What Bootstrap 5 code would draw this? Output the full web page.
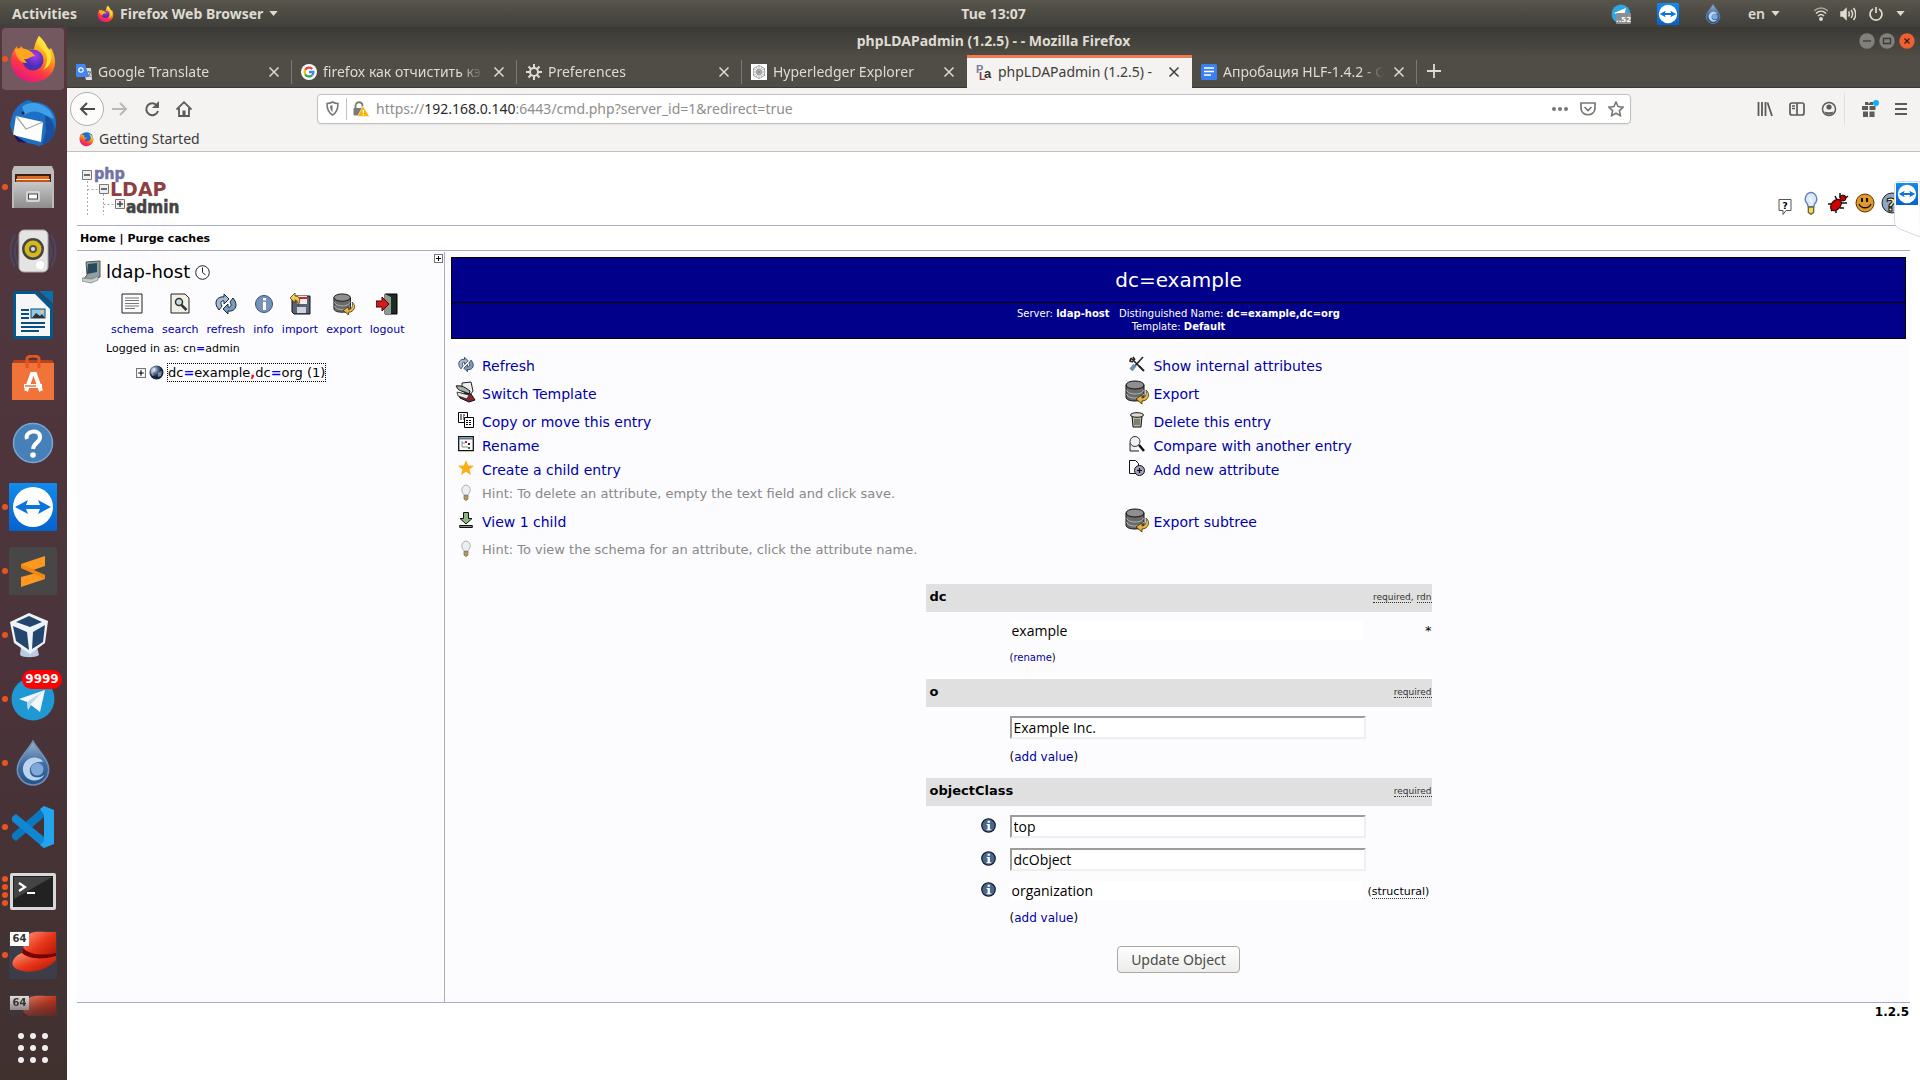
<!DOCTYPE html>
<html lang="en">
<head>
<meta charset="utf-8">
<meta name="viewport" content="width=device-width, initial-scale=1">
<title>phpLDAPadmin (1.2.5) -</title>
<link href="https://cdn.jsdelivr.net/npm/bootstrap@5.3.0/dist/css/bootstrap.min.css" rel="stylesheet">
<style>
:root { --ui: "Noto Sans", "Open Sans", sans-serif; --field: "Open Sans", "Noto Sans", sans-serif; --page: "DejaVu Sans", sans-serif; --rule: #aaaacc; --blue: #0000aa; }
body { font-family: var(--ui); font-size: 14px; line-height: 20px; min-height: 100vh; background: #fff; overflow-x: hidden; }
svg { display: block; flex: none; }
button { font-family: inherit; }
.bare { border: 0; background: none; padding: 0; color: inherit; display: flex; align-items: center; justify-content: center; }

.topbar { height: 27px; background: linear-gradient(#58554c, #403f3a); color: #dfdbd2; font-weight: 600; line-height: 27px; }
.topbar .start { flex: 1 1 82px; padding-left: 12px; gap: 20px; }
.topbar .end { flex: 1 1 0; padding-right: 15px; justify-content: flex-end; }
.topbar .status { gap: 12px; margin-left: 34px; }
.app-name, .lang { gap: 6px; }
.lang { margin-left: 27px; }
.tray { gap: 26px; }

.dock { width: 67px; flex: none; background: linear-gradient(#54383e, #4b343b 60%, #40312f); }
.dock ul { flex: 1 1 0; min-height: 0; overflow: hidden; }
.dock li { height: 64px; flex: none; position: relative; display: flex; align-items: center; padding-left: 9px; }
.dock li.current::before { content: ""; position: absolute; left: 2px; top: 1px; width: 62px; height: 62px; border-radius: 4px; background: #73595f; }
.dock li svg { position: relative; }
.pips { position: absolute; left: 2px; top: 0; bottom: 0; display: flex; flex-direction: column; justify-content: center; gap: 2px; }
.pips i { width: 6px; height: 6px; border-radius: 50%; background: #e95420; }
.unread { position: absolute; left: 22px; top: 3px; background: #f00; color: #fff; font: 700 12px/19px var(--page); border-radius: 10px; width: 40px; text-align: center; }
.bits { position: absolute; left: 10px; top: 9px; width: 19px; background: #fff; color: #333; font: 700 10px/14px var(--page); text-align: center; }
.fade-end { -webkit-mask-image: linear-gradient(#000 5%, transparent 58%); mask-image: linear-gradient(#000 5%, transparent 58%); }
.apps { height: 64px; padding-left: 18px; flex: none; }

.titlebar { height: 28px; background: linear-gradient(#3a3935, #4e4b44); color: #dfdbd2; font-weight: 700; line-height: 28px; position: relative; }
.controls { position: absolute; right: 5px; top: 6px; gap: 4px; }
.tabs { background: #504d46; height: 33px; border-bottom: 1px solid #3a3833; color: #dfdbd2; }
.tab { width: 225px; padding: 0 12px 0 9px; gap: 6px; position: relative; height: 33px; }
.tab + .tab:not(.active)::before, .newtab::before { content: ""; position: absolute; left: -1px; top: 5px; height: 24px; border-left: 1px solid #7b7871; }
.tab.active { background: #f4f3f1; color: #3f3d3a; box-shadow: inset 0 3px #ef7b50; }
.tab.active + .tab::before { display: none; }
.tab-name { flex: 1 1 0; overflow: hidden; white-space: nowrap; -webkit-mask-image: linear-gradient(90deg, #000 84%, transparent 98%); mask-image: linear-gradient(90deg, #000 84%, transparent 98%); }
.tab.active .tab-name { -webkit-mask-image: none; mask-image: none; }
.newtab { position: relative; width: 34px; }

.toolbar-area { background: #f4f3f1; color: #5b5b58; border-bottom: 1px solid #c3c1be; height: 64px; }
.navrow { height: 41px; padding: 0 9px 0 3px; }
.back { width: 34px; height: 34px; border: 1px solid #b2b0ad; border-radius: 50%; background: #fcfcfb; }
.navbtn { width: 32px; height: 32px; }
.address { margin-left: 117px; height: 30px; flex: 0 1 1314px; background: #fff; border: 1px solid #c4c2bf; border-radius: 4px; box-shadow: 0 1px 2px #0001; padding: 0 6px; }
.address .url { color: #8e8e8b; white-space: nowrap; flex: 1 1 0; }
.address .url b { color: #2b2b29; font-weight: 400; }
.address .mode { width: 16px; height: 22px; }
.address .mid { border-left: 1px solid #c4c2bf; height: 22px; margin-left: 6px; padding-left: 5px; width: 30px; }
.address .marks { gap: 12px; }
.gift { width: 46px; padding-left: 4px; }
.menu { width: 20px; }
.bookmarks { padding: 0 12px; }
.bookmarks a { color: #3c3b39; text-decoration: none; gap: 5px; line-height: 20px; }
.window { min-width: 0; }

.page { font-family: var(--page); font-size: 14px; color: #000; padding: 0 10px; position: relative; background: #fff; }
.page a { text-decoration: none; color: var(--blue); }
.brand { height: 74px; border-bottom: 1px solid var(--rule); padding: 0 7px 10px 5px; }
.brand .tools { gap: 5px; }
.crumbs { height: 25px; border-bottom: 1px solid var(--rule); font: 700 11px/25px var(--page); padding: 0 3px; }
.page .crumbs a { color: #000; }
.workspace { background: #fcfcfe; border-bottom: 1px solid var(--rule); min-height: 751px; margin-top: 1px; }
.tree { width: 368px; flex: none; border-right: 1px solid var(--rule); padding: 2px 1px 0 5px; }
.tree .host { font-size: 18px; line-height: 24px; gap: 5px; margin-top: -3px; }
.tree .links { gap: 8px; padding: 9px 0 0 29px; font-size: 11px; line-height: 16px; }
.tree .links a { gap: 7px; }
.signed { font-size: 11px; line-height: 14px; padding: 4px 0 0 24px; }
.eq { color: #00f; font-weight: 700; } .comma { color: #f00; font-weight: 700; }
.tree .node { padding: 7px 0 0 54px; font-size: 13px; gap: 3px; }
.page .node a { color: #000; border: 1px dotted #000; line-height: 17px; }
.main { flex: 1 1 0; padding: 5px 4px 28px 6px; }
.entry { background: #00008b; border: 1px solid #000; color: #fff; text-align: center; }
.entry h1 { font-size: 20px; line-height: 44px; margin: 0; font-weight: 400; border-bottom: 1px solid #000; }
.entry p { font-size: 10px; line-height: 13px; margin: 0; padding: 4px 0 5px; height: 35px; }
.actions { padding-top: 15px; display: grid; grid-template-columns: 46.15% 1fr; grid-template-rows: 24px 32px repeat(4, 24px) 32px 24px; line-height: 20px; }
.act { display: flex; align-items: center; gap: 1px; }
.act .ico { width: 30px; display: flex; justify-content: center; padding-bottom: 4px; }
.hint { color: #888; font-size: 13px; }
.attrs { width: 506px; margin: 22px auto 0; font-size: 13px; }
.attr-head { background: #e0e0e0; height: 28px; padding: 0 0 2px 4px; }
.attr-head label { font-weight: 700; }
.notes { font-size: 9px; line-height: 11px; color: #333; }
abbr { text-decoration: none; border-bottom: 1px dotted #333; cursor: help; }
.attr-body { padding: 9px 0 13px; display: flex; flex-direction: column; gap: 10px; font-size: 12px; line-height: 16px; }
.value { display: grid; grid-template-columns: 55px 15px 14px 356px 1fr; align-items: center; }
.value input { grid-column: 4; font: 14px/19px var(--field); color: #000; background: #fff; border: 2px solid; border-color: #9c9c9c #efefee #efefee #9c9c9c; height: 23px; padding: 0 2px; border-radius: 0; }
.value input[readonly] { border: 0; height: 19px; width: 352px; outline: 0; }
.value .info { grid-column: 2; padding-bottom: 3px; }
.value .aside { grid-column: 5; font-size: 11px; padding: 2px 0 0 2px; white-space: nowrap; }
.value .star { grid-column: 5; font-size: 13px; text-align: right; line-height: 16px; }
.more { padding-left: 84px; }
.tiny { font-size: 10px; }
.update { font: 14px/25px var(--ui); color: #4c4c4c; background: linear-gradient(#fefefe, #ececea); border: 1px solid #aaa8a5; border-radius: 4px; padding: 0 13px; margin-top: 7px; }
.version { font: 700 12px/18px var(--page); text-align: right; padding-right: 1px; }
.tv-tab { position: absolute; right: 0; top: 29px; }
</style>
</head>
<body class="d-flex flex-column">

<svg width="0" height="0" class="position-absolute" aria-hidden="true">
  <defs>
    <linearGradient id="ffA" x1=".8" y1="0" x2=".3" y2="1"><stop offset="0" stop-color="#fff44f"/><stop offset=".4" stop-color="#ff980e"/><stop offset=".7" stop-color="#ff3647"/><stop offset="1" stop-color="#e31587"/></linearGradient>
    <radialGradient id="ffB" cx=".6" cy=".3"><stop offset="0" stop-color="#a83bf0"/><stop offset="1" stop-color="#4c2fb4"/></radialGradient>
    <linearGradient id="blueV" x1="0" y1="0" x2="0" y2="1"><stop offset="0" stop-color="#128cec"/><stop offset="1" stop-color="#0562cc"/></linearGradient>
    <linearGradient id="drop" x1="0" y1="0" x2="0" y2="1"><stop offset="0" stop-color="#9db3c9"/><stop offset=".5" stop-color="#3f6ea8"/><stop offset="1" stop-color="#23508c"/></linearGradient>
    <linearGradient id="metal" x1="0" y1="0" x2="0" y2="1"><stop offset="0" stop-color="#c8c8c8"/><stop offset="1" stop-color="#8d8d8d"/></linearGradient>
    <linearGradient id="hat" x1="0" y1="0" x2="1" y2="1"><stop offset="0" stop-color="#ff9b7a"/><stop offset=".5" stop-color="#e8361b"/><stop offset="1" stop-color="#a81200"/></linearGradient>
    <linearGradient id="gold" x1="0" y1="0" x2="0" y2="1"><stop offset="0" stop-color="#ffe58a"/><stop offset="1" stop-color="#d99a1c"/></linearGradient>
    <radialGradient id="globe" cx=".35" cy=".3"><stop offset="0" stop-color="#d5e0ee"/><stop offset=".5" stop-color="#5a7499"/><stop offset="1" stop-color="#16233c"/></radialGradient>
  </defs>
  <symbol id="firefox" viewBox="0 0 48 48">
    <path d="M30 1c6 6 8 10 9 15l3-3c3 5 4 10 4 14 0 12-10 20-22 20S2 38 2 26c0-6 2-11 6-15l1 5 3-5 4 5c4-2 8-1 9-2 1-5 2-9 5-13z" fill="url(#ffA)"/>
    <circle cx="24" cy="25" r="10.500" fill="url(#ffB)"/>
    <path d="M6 14c6-2 16 0 20 7-4 0-7 4-11 3l3 4C10 28 6 20 6 14z" fill="#ffa51e"/>
    <path d="M30 1c-4 8 2 12 6 16 3 4 3 12-2 18 12-6 9-19 4-23C36 7 33 4 30 1z" fill="#ffdf3a"/>
  </symbol>
  <symbol id="teamviewer" viewBox="0 0 48 48">
    <rect width="48" height="48" rx="1" fill="url(#blueV)"/><circle cx="24" cy="24" r="20" fill="#fff"/>
    <path d="M6 24l13-7-2 5h14l-2-5 13 7-13 7 2-5H17l2 5z" fill="#0a74dc"/>
  </symbol>
  <symbol id="deluge" viewBox="0 0 34 44">
    <path d="M17 1c5 9 15 18 15 27a15 15 0 0 1-30 0C2 19 12 10 17 1z" fill="url(#drop)" stroke="#6f8fb4" stroke-width="1.500"/>
    <path d="M27 21a11 11 0 1 0 1 12c-5 5-15 3-14-5 1-6 8-8 13-7z" fill="#bcd3ec"/><circle cx="21" cy="28" r="6" fill="#7fa9d6"/>
  </symbol>
  <symbol id="close" viewBox="0 0 12 12"><path d="M1.500 1.500l9 9m0-9l-9 9" stroke="currentColor" stroke-width="1.500"/></symbol>
  <symbol id="caret" viewBox="0 0 10 6"><path d="M0 0h10L5 6z" fill="currentColor"/></symbol>
  <symbol id="sync" viewBox="0 0 22 20">
    <path d="M2 13C-1 7 3 2 9 3V0l5 5-5 5V7C6 6 5 9 7 12l-3 4z" fill="#9dbbd8" stroke="#1b2633"/>
    <path d="M20 7c3 6-1 11-7 10v3l-5-5 5-5v3c3 1 4-2 2-5l3-4z" fill="#7b9cc0" stroke="#1b2633"/>
  </symbol>
  <symbol id="disk-out" viewBox="0 0 24 24">
    <path d="M1 5v12c0 3 5 4 9 4s9-1 9-4V5z" fill="#6a6a6a" stroke="#111"/><ellipse cx="10" cy="5" rx="9" ry="4" fill="#8f8f8f" stroke="#111"/>
    <path d="M1.500 10c1 3 5 4 8.500 4s8-1 8.500-4M1.500 14c1 3 5 4 8.500 4s8-1 8.500-4" fill="none" stroke="#b5b5b5"/>
    <path d="M21 10c5 4 2 11-4 11v3l-6-5 6-4v3c3 0 5-3 4-8z" fill="url(#gold)" stroke="#3b2700" stroke-width=".8"/>
  </symbol>
  <symbol id="bulb" viewBox="0 0 14 18">
    <path d="M7 1a5.300 5.300 0 0 0-3 9l1 2h4l1-2A5.300 5.300 0 0 0 7 1z" fill="#eceff2" stroke="#a9aeb4"/><path d="M5 12h4v4l-2 1.500L5 16z" fill="#b99a51" stroke="#776"/>
  </symbol>
  <symbol id="info" viewBox="0 0 16 16">
    <circle cx="8" cy="8" r="7.200" fill="#4a6790" stroke="#111c2c" stroke-width="1.300"/><path d="M7 3h2.500v2H7zM6 6.500h3.500V12H11v1H5.800v-1H7V7.500H6z" fill="#fff"/>
  </symbol>
  <symbol id="plusbox" viewBox="0 0 9 9"><rect x=".5" y=".5" width="8" height="8" fill="#fff" stroke="#777"/><path d="M2 4.500h5M4.500 2v5" stroke="#000"/></symbol>
  <symbol id="redhat" viewBox="0 0 48 48">
    <rect width="48" height="48" rx="2" fill="#3d3d4a"/><path d="M16 8C20-1 30 1 37 1h10v26c-12 2-30 1-34-4z" fill="url(#hat)"/>
    <path d="M14 17c6 7 20 8 33 5v7c-14 2-29 1-34-6z" fill="#700"/><path d="M13 22c-8 3-11 9-9 13 6 8 30 9 43-6v-4c-13 4-28 3-34-3z" fill="url(#hat)"/>
  </symbol>
</svg>

<header class="topbar d-flex align-items-center">
  <div class="start d-flex align-items-center">
    <button class="bare fw-bold">Activities</button>
    <button class="bare app-name fw-bold"><svg width="17" height="18"><use href="#firefox"/></svg>Firefox Web Browser<svg width="9" height="5"><use href="#caret"/></svg></button>
  </div>
  <time class="fw-bold">Tue 13:07</time>
  <div class="end d-flex align-items-center">
    <div class="tray d-flex align-items-center">
      <svg width="20" height="20" viewBox="0 0 20 20"><circle cx="10" cy="10" r="9.500" fill="#31a5dc"/><path d="M3 9l12-5-2 9z" fill="#fff"/><rect x="5" y="9" width="15" height="11" rx="1" fill="#8c8f90"/><text x="12.500" y="17.500" font-family="DejaVu Sans" font-size="7" text-anchor="middle" fill="#fff">..52</text></svg>
      <svg width="22" height="22"><use href="#teamviewer"/></svg>
      <svg width="16" height="20"><use href="#deluge"/></svg>
    </div>
    <button class="bare lang fw-semibold">en<svg width="9" height="5"><use href="#caret"/></svg></button>
    <div class="status d-flex align-items-center">
      <svg width="14" height="14" viewBox="0 0 14 14" fill="none" stroke="#dfdbd2" stroke-width="1.500"><path d="M0 4c4-4 10-4 14 0" opacity=".6"/><path d="M2 6.500c3-3 7-3 10 0M4 9c2-2 4-2 6 0"/><circle cx="7" cy="12" r="1.200" fill="#dfdbd2"/></svg>
      <svg width="16" height="14" viewBox="0 0 16 14" fill="none" stroke="#dfdbd2" stroke-width="1.500"><path d="M1 5h2l3-3v10L3 9H1z" fill="#dfdbd2"/><path d="M8.500 4.500c1 1.500 1 3.500 0 5M11 3c2 2.500 2 5.500 0 8M13.500 1c3 4 3 8 0 12"/></svg>
      <svg width="16" height="16" viewBox="0 0 16 16" fill="none" stroke="#dfdbd2" stroke-width="1.700"><path d="M5 3a6 6 0 1 0 6 0M8 1v6"/></svg>
      <svg width="9" height="5"><use href="#caret"/></svg>
    </div>
  </div>
</header>

<div class="d-flex flex-grow-1">
  <nav class="dock d-flex flex-column" aria-label="Dock">
    <ul class="list-unstyled m-0 d-flex flex-column">
      <li class="current"><span class="pips"><i></i></span><svg width="48" height="48"><use href="#firefox"/></svg></li>
      <li><svg width="48" height="48" viewBox="0 0 48 48"><path d="M2 22C4 8 14 2 20 1l4 2c13 0 23 8 23 21 0 8-3 15-9 20l-8 3-6-2C10 44 2 36 1 25z" fill="#1d6fc4"/><path d="M13 8c8-8 28-4 32 12l-9-4c-6-4-14-5-20 0z" fill="#3fa0e8"/><path d="M36 16c8 4 11 12 9 21-4 5-8 8-12 9l4-14z" fill="#1a4f9f"/><path d="M7 17l27 6-2 20L4 36z" fill="#fdfdfd"/><path d="M7 17l10 13 17-7" fill="none" stroke="#a9a9a9" stroke-width="1.300"/><path d="M4 35l5 8 9 1z" fill="#22155c"/><circle cx="14" cy="14" r="1.500" fill="#222"/></svg></li>
      <li><span class="pips"><i></i></span><svg width="48" height="48" viewBox="0 0 48 48"><path d="M5 3h38l2 5v37H3V8z" fill="#bdbdbd"/><path d="M6 11h36v10H6z" fill="#3a2015"/><path d="M8 13h32v3H8z" fill="#e0691f"/><path d="M7 16h34v1H7z" fill="#fff0d5"/><path d="M7 17h34v3H7z" fill="#c9521a"/><rect x="5" y="19" width="38" height="26" fill="url(#metal)"/><rect x="17" y="28" width="14" height="11" rx="2" fill="#d5d5d5"/><rect x="19.500" y="31" width="9" height="5" fill="#fff" stroke="#444"/></svg></li>
      <li><svg width="48" height="48" viewBox="0 0 48 48"><path d="M6 8C0 18 0 30 6 40M9 12c-4 8-4 17 0 25M42 8c6 10 6 22 0 32M39 12c4 8 4 17 0 25" fill="none" stroke="#3f5a8c" stroke-width="2" opacity=".5"/><rect x="10" y="3" width="29" height="42" rx="5" fill="#e4e4e2" stroke="#aaa"/><circle cx="24" cy="22" r="11" fill="#444"/><circle cx="24" cy="22" r="8.500" fill="#d7b81c"/><circle cx="24" cy="22" r="4" fill="#555"/><circle cx="24" cy="22" r="2" fill="#ddd"/><circle cx="31" cy="38" r="4" fill="#fff"/></svg></li>
      <li><svg width="48" height="48" viewBox="0 0 48 48"><path d="M7 0h20l17 14v31c0 2-1 3-3 3H7c-2 0-3-1-3-3V3c0-2 1-3 3-3z" fill="#05588e"/><path d="M30 0h14v13z" fill="#0a6fae"/><path d="M7 3h19l15 15v27H7z" fill="#f6f6f6"/><path d="M12 19h8M12 23h8M12 27h8M12 32h24M12 36h24M12 40h18" stroke="#08517f" stroke-width="1.800"/><rect x="22" y="18" width="14" height="9" fill="#8fc9ec" stroke="#08517f"/><path d="M23 27l4-5 4 3 2-2 3 4z" fill="#333"/><circle cx="33" cy="20.500" r="1.500" fill="#fc3"/></svg></li>
      <li><svg width="48" height="48" viewBox="0 0 48 48"><path d="M3 8h42v37H3z" fill="#f0733a"/><path d="M3 8h42l-2-3H5z" fill="#b3431c"/><path d="M18 13V4c0-4 12-4 12 0v9" fill="none" stroke="#e5551f" stroke-width="3"/><path d="M17 36l6-17h3l6 17M15 31h18" fill="none" stroke="#fff" stroke-width="4"/><path d="M16 31h11" stroke="#f0733a" stroke-width="1.500"/></svg></li>
      <li><svg width="48" height="48" viewBox="0 0 48 48"><circle cx="24" cy="24" r="19.500" fill="#4580b8" stroke="#79a6d0" stroke-width="1.500"/><path d="M18 20c-3-8 13-11 13-2 0 6-6 5-7 12" fill="none" stroke="#fff" stroke-width="4"/><circle cx="24" cy="36" r="2.800" fill="#fff"/></svg></li>
      <li><span class="pips"><i></i></span><svg width="48" height="48"><use href="#teamviewer"/></svg></li>
      <li><span class="pips"><i></i></span><svg width="48" height="48" viewBox="0 0 48 48"><rect width="48" height="48" rx="2" fill="#474747"/><path d="M12 17l24-8v10l-15 5 15 4v4l-24 8V30l15-4-15-5z" fill="#ff9820"/><path d="M12 17v4l24 11v-4z" fill="#f08712"/></svg></li>
      <li><span class="pips"><i></i></span><svg width="48" height="48" viewBox="0 0 48 48"><path d="M12 36h16l2 8c-4 3-16 3-19 0z" fill="#b9cbe0"/><path d="M20 2l19 8-3 22-15 11L5 32 1 11z" fill="#eef3fb"/><path d="M20 5l13 6-12 5L7 11zM4 15l14 6 2 18L7 30zM24 21l12-7-2 17-11 7z" fill="#24466e"/></svg></li>
      <li><span class="pips"><i></i></span><svg width="48" height="48" viewBox="0 0 48 48"><circle cx="24" cy="24" r="21.500" fill="#2098d4"/><path d="M10 24l26-9-5 22-9-7-3 5-1-8z" fill="#f2f8fc"/><path d="M18 27l15-10-11 12-3 6z" fill="#bcd8ea"/></svg><span class="unread">9999</span></li>
      <li><span class="pips"><i></i></span><svg width="48" height="46"><use href="#deluge"/></svg></li>
      <li><span class="pips"><i></i></span><svg width="48" height="48" viewBox="0 0 48 48"><path d="M35 3L3 31v4l4 3L35 14z" fill="#0a78be"/><path d="M3 14l4-3 28 23v11L3 18z" fill="#1187d3"/><path d="M35 3l10 4v34l-10 4-4-3 4-4V12l-4-6z" fill="#25a4ee"/></svg></li>
      <li><span class="pips"><i></i><i></i><i></i><i></i></span><svg width="48" height="48" viewBox="0 0 48 48"><rect x="1" y="6" width="46" height="37" rx="2" fill="#d8d8d6"/><rect x="4" y="9" width="40" height="31" fill="#222"/><path d="M5 10h38L5 32z" fill="#444"/><path d="M10 16l6 4-6 4M18 26h8" fill="none" stroke="#fff" stroke-width="2.200"/></svg></li>
      <li><span class="pips"><i></i></span><svg width="48" height="48"><use href="#redhat"/></svg><span class="bits">64</span></li>
      <li class="fade-end"><svg width="48" height="48"><use href="#redhat"/></svg><span class="bits">64</span></li>
    </ul>
    <button class="bare apps justify-content-start" aria-label="Show applications"><svg width="30" height="30" viewBox="0 0 30 30" fill="#eee"><circle cx="3" cy="3" r="3"/><circle cx="15" cy="3" r="3"/><circle cx="27" cy="3" r="3"/><circle cx="3" cy="15" r="3"/><circle cx="15" cy="15" r="3"/><circle cx="27" cy="15" r="3"/><circle cx="3" cy="27" r="3"/><circle cx="15" cy="27" r="3"/><circle cx="27" cy="27" r="3"/></svg></button>
  </nav>

  <div class="window flex-grow-1">
    <div class="titlebar text-center">phpLDAPadmin (1.2.5) - - Mozilla Firefox
      <div class="controls d-flex">
        <button class="bare" aria-label="Minimize"><svg width="16" height="16" viewBox="0 0 16 16"><circle cx="8" cy="8" r="7.700" fill="#82807a"/><path d="M4 8h8" stroke="#3c3b37" stroke-width="1.300"/></svg></button>
        <button class="bare" aria-label="Maximize"><svg width="16" height="16" viewBox="0 0 16 16"><circle cx="8" cy="8" r="7.700" fill="#82807a"/><path d="M4.500 5.500h7v5h-7z" fill="none" stroke="#3c3b37" stroke-width="1.300"/></svg></button>
        <button class="bare" aria-label="Close"><svg width="16" height="16" viewBox="0 0 16 16"><circle cx="8" cy="8" r="7.700" fill="#ee5f31"/><path d="M5.500 5.500l5 5m0-5l-5 5" stroke="#3c1c10" stroke-width="1.300"/></svg></button>
      </div>
    </div>

    <div class="tabs d-flex">
      <div class="tab d-flex align-items-center"><svg width="16" height="16" viewBox="0 0 16 16"><path d="M7 4h8l1 12h-6z" fill="#ddd"/><path d="M0 0h9l4 13H1L0 12z" fill="#4285f4"/><circle cx="5" cy="6" r="2.200" fill="none" stroke="#fff" stroke-width="1.200"/><path d="M10 8h5M12.500 7v1m2 0c-1 3-2 4-4 5m0-4l4 4" stroke="#67788a" fill="none"/></svg><span class="tab-name">Google Translate</span><button class="bare" aria-label="Close tab"><svg width="12" height="12"><use href="#close"/></svg></button></div>
      <div class="tab d-flex align-items-center"><svg width="16" height="16" viewBox="0 0 16 16" fill="none" stroke-width="2.300"><circle cx="8" cy="8" r="8" fill="#fff" stroke="none"/><path d="M11.200 5A4.400 4.400 0 0 0 4.200 5.800" stroke="#ea4335"/><path d="M4.200 5.800a4.400 4.400 0 0 0 0 4.400" stroke="#fbbc05"/><path d="M4.200 10.200a4.400 4.400 0 0 0 7 1" stroke="#34a853"/><path d="M8 8h4.400a4.400 4.400 0 0 1-1.200 3.200" stroke="#4285f4"/></svg><span class="tab-name">firefox как отчистить кэ</span><button class="bare" aria-label="Close tab"><svg width="12" height="12"><use href="#close"/></svg></button></div>
      <div class="tab d-flex align-items-center"><svg width="16" height="16" viewBox="0 0 16 16" fill="none" stroke="currentColor" stroke-width="2"><circle cx="8" cy="8" r="4"/><path d="M8 0v4M8 12v4M0 8h4M12 8h4M2.500 2.500l2.500 2.500M11 11l2.500 2.500M13.500 2.500L11 5M5 11l-2.500 2.500"/></svg><span class="tab-name">Preferences</span><button class="bare" aria-label="Close tab"><svg width="12" height="12"><use href="#close"/></svg></button></div>
      <div class="tab d-flex align-items-center"><svg width="16" height="16" viewBox="0 0 16 16" fill="none" stroke="#888" stroke-width=".7"><path d="M0 0h16v16H0z" fill="#fff" stroke="none"/><circle cx="8" cy="8" r="2.500"/><path d="M8 1.500l5.500 3v7L8 14.500l-5.500-3v-7zM2.500 4.500l11 7M13.500 4.500l-11 7M8 1.500v13M5 3l6 10M11 3L5 13M2.500 8h11"/></svg><span class="tab-name">Hyperledger Explorer</span><button class="bare" aria-label="Close tab"><svg width="12" height="12"><use href="#close"/></svg></button></div>
      <div class="tab active d-flex align-items-center"><svg width="16" height="16" viewBox="0 0 16 16" font-family="Liberation Sans" font-weight="700"><text x="0" y="9" font-size="11" fill="#7a7a9c">P</text><text x="3" y="16" font-size="11" fill="#8b4040">L</text><text x="8" y="14" font-size="13" fill="#333">a</text></svg><span class="tab-name">phpLDAPadmin (1.2.5) -</span><button class="bare" aria-label="Close tab"><svg width="12" height="12"><use href="#close"/></svg></button></div>
      <div class="tab d-flex align-items-center"><svg width="16" height="16" viewBox="0 0 16 16"><rect width="16" height="16" rx="1.500" fill="#3a80f0"/><path d="M3 4h10M3 7.500h10M3 11h7" stroke="#fff" stroke-width="1.700"/></svg><span class="tab-name">Апробация HLF-1.4.2 - G</span><button class="bare" aria-label="Close tab"><svg width="12" height="12"><use href="#close"/></svg></button></div>
      <button class="bare newtab" aria-label="New tab"><svg width="14" height="14" viewBox="0 0 14 14"><path d="M7 0v14M0 7h14" stroke="currentColor" stroke-width="1.800"/></svg></button>
    </div>

    <div class="toolbar-area">
      <div class="navrow d-flex align-items-center">
        <button class="bare back" aria-label="Back"><svg width="16" height="14" viewBox="0 0 16 14" fill="none" stroke="#4b4b48" stroke-width="2"><path d="M8 1L2 7l6 6M2 7h14"/></svg></button>
        <button class="bare navbtn" aria-label="Forward"><svg width="16" height="14" viewBox="0 0 16 14" fill="none" stroke="#b9b8b5" stroke-width="2"><path d="M8 1l6 6-6 6M14 7H0"/></svg></button>
        <button class="bare navbtn" aria-label="Reload"><svg width="16" height="16" viewBox="0 0 16 16" fill="none" stroke="#5b5b58" stroke-width="2"><path d="M13 4.500A6 6 0 1 0 14 10"/><path d="M15 0v7H8z" fill="#5b5b58" stroke="none"/></svg></button>
        <button class="bare navbtn" aria-label="Home"><svg width="16" height="16" viewBox="0 0 16 16" fill="none" stroke="#5b5b58" stroke-width="1.800"><path d="M.5 8.500L8 1.200l7.500 7.300M3 7v8h10V7"/><path d="M6.500 14V9.500h3V14z" fill="#5b5b58" stroke="none"/></svg></button>
        <div class="address d-flex align-items-center">
          <button class="bare mode" aria-label="Tracking protection"><svg width="13" height="15" viewBox="0 0 13 15"><path d="M1 2.500c2 0 4-.5 5.500-1.500C8 2 10 2.500 12 2.500c0 5-1 9-5.500 11.500C2 11.500 1 7.500 1 2.500z" fill="none" stroke="#777774" stroke-width="1.600"/><path d="M6.500 4v7C4.500 9.500 4 7 4 5z" fill="#777774"/></svg></button>
          <button class="bare mid justify-content-start" aria-label="Connection is not secure"><svg width="18" height="16" viewBox="0 0 18 16"><path d="M3.500 7V5c0-5 7-5 7 0v2" fill="none" stroke="#7a7a77" stroke-width="1.800"/><rect x="1.500" y="7" width="11" height="7.500" rx="1" fill="#7a7a77"/><path d="M11 5l6.500 10.500h-12z" fill="#ffb400" stroke="#fff" stroke-width=".6"/><path d="M11.300 9v3M11.300 13v1.200" stroke="#fff" stroke-width="1.300"/></svg></button>
          <div class="url">https://<b>192.168.0.140</b>:6443/cmd.php?server_id=1&amp;redirect=true</div>
          <div class="marks d-flex align-items-center">
            <svg width="16" height="4" viewBox="0 0 16 4" fill="#777774"><circle cx="2" cy="2" r="2"/><circle cx="8" cy="2" r="2"/><circle cx="14" cy="2" r="2"/></svg>
            <svg width="16" height="14" viewBox="0 0 16 14" fill="none" stroke="#777774" stroke-width="1.700"><path d="M1 1h14v5c0 9-14 9-14 0zM4.500 5l3.500 3.500L11.500 5"/></svg>
            <svg width="16" height="16" viewBox="0 0 16 16" fill="none" stroke="#777774" stroke-width="1.600"><path d="M8 1l2.100 4.600 5 .6-3.700 3.400 1 5L8 12.200l-4.400 2.400 1-5L.9 6.200l5-.6z"/></svg>
          </div>
        </div>
        <div class="d-flex align-items-center ms-auto">
          <button class="bare navbtn" aria-label="Library"><svg width="16" height="16" viewBox="0 0 16 16" stroke="#5b5b58" stroke-width="1.800"><path d="M1.500 1v14M5 1v14M8.500 1v14M10.500 1.500L15 15"/></svg></button>
          <button class="bare navbtn" aria-label="Sidebars"><svg width="16" height="14" viewBox="0 0 16 14" fill="none" stroke="#5b5b58" stroke-width="1.700"><rect x="1" y="1" width="14" height="12" rx="2"/><path d="M8 1v12M3 4h3M3 6.500h3" /></svg></button>
          <button class="bare navbtn border-end" aria-label="Account"><svg width="16" height="16" viewBox="0 0 16 16"><circle cx="8" cy="8" r="6.500" fill="none" stroke="#5b5b58" stroke-width="1.500"/><circle cx="8" cy="6" r="2.600" fill="#5b5b58"/><path d="M3.500 10.500c2 1 7 1 9 0-1 4-8 4-9 0z" fill="#5b5b58"/></svg></button>
          <button class="bare gift" aria-label="What's new"><svg width="18" height="18" viewBox="0 0 18 18" fill="#5b5b58"><path d="M1 6h6v4H1zM8.500 6h6v4h-6zM2 11.500h5V17H2zM8.500 11.500h5V17h-5zM4 2h3l1 2 1-2h3v3H4z"/><circle cx="15" cy="3" r="3" fill="#0ab0ff"/></svg></button>
          <button class="bare menu" aria-label="Menu"><svg width="12" height="14" viewBox="0 0 12 14"><path d="M0 2h12M0 7h12M0 12h12" stroke="#5b5b58" stroke-width="2"/></svg></button>
        </div>
      </div>
      <div class="bookmarks d-flex"><a href="#" class="d-flex align-items-center"><svg width="15" height="16" viewBox="0 0 48 48"><circle cx="24" cy="24" r="22" fill="#1f6fd0"/><path d="M4 8c3 4 8 3 13 4-3 6 2 8 8 8-3 6-8 4-6 9 3 5 14 3 18-4 2-8-2-14-6-17 20 4 21 36-6 39C6 48-2 28 4 8z" fill="url(#ffA)"/></svg>Getting Started</a></div>
    </div>

    <div class="page">
      <div class="brand d-flex justify-content-between align-items-end">
        <svg width="100" height="49" viewBox="0 0 100 49" role="img" aria-label="phpLDAPadmin">
          <path d="M5.500 15v34M5.500 23.500H17M21.500 28v21M21.500 38.500H32" stroke="#aaa" stroke-dasharray="2 2" fill="none"/>
          <g fill="#eee" stroke="#777"><path d="M.5 4.500h9v9h-9zM17.500 18.500h9v9h-9zM33.500 33.500h9v9h-9z"/><path d="M2 9h6M19 23h6M35 38h6M38 35v6" stroke="#444" stroke-width="1.500"/></g>
          <g font-weight="700"><text x="12" y="13" font-family="DejaVu Sans Condensed, DejaVu Sans" font-size="16" fill="#7373a6" stroke="#7373a6" stroke-width=".5">php</text><text x="28" y="30" font-family="DejaVu Sans" font-size="19" fill="#8f3f42">LDAP</text><text x="44" y="47" font-family="DejaVu Sans Condensed, DejaVu Sans" font-size="17" fill="#444" stroke="#444" stroke-width=".5">admin</text></g>
        </svg>
        <div class="tools d-flex align-items-end">
          <svg width="20" height="16" viewBox="0 0 20 16"><path d="M4 .5h12v11h-5l-3 4v-4H4z" fill="#fff" stroke="#555"/><text x="10" y="9.500" font-family="DejaVu Sans" font-weight="700" font-size="9" text-anchor="middle">?</text></svg>
          <svg width="22" height="24" viewBox="0 0 14 18"><path d="M7 1a5 5 0 0 0-2.800 8.500L5 12h4l.8-2.500A5 5 0 0 0 7 1z" fill="#dbe9fb" stroke="#5d7fc0"/><path d="M5 12h4v4l-2 1.500L5 16z" fill="#ffd83a" stroke="#665"/><path d="M6 5l2 4" stroke="#fff"/></svg>
          <svg width="22" height="24" viewBox="0 0 22 24"><path d="M1 13h5M4 20l3-3M9 22v-4M8 5l2 4M13 2v5M21 5l-5 4M20 12h-6M17 17h-4" stroke="#111" stroke-width="1.500"/><ellipse cx="9" cy="14" rx="4.500" ry="6.500" transform="rotate(40 9 14)" fill="#c00" stroke="#200"/><circle cx="16" cy="7" r="3" fill="#b00" stroke="#300"/></svg>
          <svg width="22" height="24" viewBox="0 0 22 24"><circle cx="11" cy="12" r="9" fill="#e09a2c" stroke="#5b3300"/><path d="M8 7v4M13 7v4" stroke="#111" stroke-width="2"/><path d="M5 13c2 5 10 5 12 0" fill="none" stroke="#111" stroke-width="1.300"/></svg>
          <svg width="22" height="24" viewBox="0 0 22 24"><circle cx="11" cy="12" r="10" fill="#8ea6c6" stroke="#222"/><text x="10" y="20" font-family="DejaVu Sans" font-weight="700" font-size="17" text-anchor="middle" fill="#fff0b0" stroke="#111">?</text></svg>
        </div>
      </div>
      <svg class="tv-tab" width="26" height="56" viewBox="0 0 26 56"><path d="M26 .5H5C2 .5.500 2 .500 4v36c0 4 2 6 5 8l21 8z" fill="#fff" stroke="#d5d9e2"/><svg x="2" y="2" width="22" height="22"><use href="#teamviewer"/></svg></svg>
      <nav class="crumbs"><a href="#">Home</a> | <a href="#">Purge caches</a></nav>

      <div class="workspace d-flex">
        <aside class="tree">
          <div class="d-flex justify-content-end"><svg width="9" height="9"><use href="#plusbox"/></svg></div>
          <div class="host d-flex align-items-center">
            <svg width="19" height="24" viewBox="0 0 19 24"><path d="M4 2l14-1v16l-8 3H1l4-5z" fill="#8fa0a0" stroke="#555"/><path d="M6 4l9-1v9l-10 2z" fill="#27495a"/><path d="M0 18l10 1 6-3v4l-7 3-9-2z" fill="#c8cccb" stroke="#666" stroke-width=".6"/></svg>
            <span>ldap-host</span>
            <svg width="15" height="15" viewBox="0 0 15 15" fill="#fff" stroke="#222"><circle cx="7.500" cy="7.500" r="6.800"/><path d="M7.500 2.500v5l3 2.500"/></svg>
          </div>
          <div class="links d-flex">
            <a href="#" class="d-flex flex-column align-items-center"><svg width="22" height="22" viewBox="0 0 22 22"><path d="M1 1h20v19H1z" fill="#fafafa" stroke="#222"/><path d="M4 5h14M4 7.500h14M4 10.500h14M4 13h14M4 15.500h10" stroke="#777"/></svg>schema</a>
            <a href="#" class="d-flex flex-column align-items-center"><svg width="22" height="22" viewBox="0 0 22 22"><path d="M2 1h14l4 4v15H2z" fill="#f1efe6" stroke="#222"/><circle cx="10" cy="9" r="3.500" fill="#cdd" stroke="#333" stroke-width="1.500"/><path d="M12.500 12l5 5" stroke="#333" stroke-width="2.500"/></svg>search</a>
            <a href="#" class="d-flex flex-column align-items-center"><svg width="22" height="22"><use href="#sync"/></svg>refresh</a>
            <a href="#" class="d-flex flex-column align-items-center"><svg width="20" height="22" viewBox="0 0 20 22"><circle cx="10" cy="11" r="8.500" fill="#7593bd" stroke="#3c5271"/><path d="M9 5h3v2.500H9zM9 9h3v8H9z" fill="#fff"/></svg>info</a>
            <a href="#" class="d-flex flex-column align-items-center"><svg width="22" height="22" viewBox="0 0 22 22"><path d="M3 3h18v18H5l-2-2z" fill="#55627a" stroke="#111"/><path d="M8 3h10v8H8z" fill="#eee"/><path d="M8 4h10v2H8z" fill="#d22"/><path d="M8 14h9v6H8z" fill="#cfd4da"/><path d="M1 5l5-5v3c5 0 6 4 3 10 0-4-1-6-3-6v3z" fill="url(#gold)" stroke="#5b3c00" stroke-width=".8"/></svg>import</a>
            <a href="#" class="d-flex flex-column align-items-center"><svg width="22" height="22"><use href="#disk-out"/></svg>export</a>
            <a href="#" class="d-flex flex-column align-items-center"><svg width="22" height="22" viewBox="0 0 22 22"><path d="M9 1h12v20H9z" fill="#1e2b22" stroke="#000"/><path d="M9 1l6 3v17H9z" fill="#8e9a90"/><path d="M0 8h6V4l7 7-7 7v-4H0z" fill="#d51c1c" stroke="#400"/></svg>logout</a>
          </div>
          <div class="signed">Logged in as: cn<span class="eq">=</span>admin</div>
          <div class="node d-flex align-items-center"><svg width="10" height="10"><use href="#plusbox"/></svg><svg width="15" height="15" viewBox="0 0 15 15"><circle cx="7.500" cy="7.500" r="7" fill="url(#globe)"/><path d="M4 3c3-1 3 2 1 4s1 3-1 4c-3-3-3-6 0-8zM9 8l4-2-1 5-3 1z" fill="#fff" opacity=".45"/></svg><a href="#">dc<span class="eq">=</span>example<span class="comma">,</span>dc<span class="eq">=</span>org (1)</a></div>
        </aside>

        <main class="main">
          <div class="entry">
            <h1>dc=example</h1>
            <p>Server: <strong>ldap-host</strong> &nbsp; Distinguished Name: <strong>dc=example,dc=org</strong><br>Template: <strong>Default</strong></p>
          </div>

          <div class="actions">
            <div class="act"><span class="ico"><svg width="16" height="15"><use href="#sync"/></svg></span><a href="#">Refresh</a></div>
            <div class="act"><span class="ico"><svg width="16" height="16" viewBox="0 0 16 16"><path d="M2 2l10 10M2 2l-1 3 3 1M4 1l2 3" stroke="#222" stroke-width="1.600" fill="none"/><path d="M14 1L5 11" stroke="#222" stroke-width="1.500"/><path d="M6 9l-4 5" stroke="#6f8fb0" stroke-width="4"/><path d="M10 10l5 5" stroke="#222" stroke-width="2"/></svg></span><a href="#">Show internal attributes</a></div>
            <div class="act"><span class="ico"><svg width="22" height="22" viewBox="0 0 22 22"><path d="M7 2l9-1 2 9-3 4-8-4z" fill="#eee" stroke="#222"/><path d="M1 5c6-1 10 2 14 5l-1 3C9 10 4 10 3 8z" fill="#aab2aa" stroke="#111"/><path d="M3 12l13 1 4 6-6 2-9-4z" fill="#8a2430" stroke="#111"/><path d="M2 11l12 3-2 4-9-3z" fill="#e8e8e8" stroke="#222" stroke-width=".8"/></svg></span><a href="#">Switch Template</a></div>
            <div class="act"><span class="ico"><svg width="24" height="24"><use href="#disk-out"/></svg></span><a href="#">Export</a></div>
            <div class="act"><span class="ico"><svg width="16" height="16" viewBox="0 0 16 16" fill="#fff" stroke="#000"><path d="M.5.500h9v10h-9z"/><path d="M2 3h6M2 5h4M2 7h4" stroke-dasharray="2 1"/><path d="M6.500 5.500h9v10h-9z"/><path d="M8 8.500h6M8 10.500h6M8 12.500h6" stroke-dasharray="2 1"/></svg></span><a href="#">Copy or move this entry</a></div>
            <div class="act"><span class="ico"><svg width="16" height="16" viewBox="0 0 16 16"><path d="M3 4h10l-1 11H4z" fill="#b9b9a6" stroke="#111"/><ellipse cx="8" cy="3" rx="6.500" ry="2.300" fill="#ddddcf" stroke="#111"/><path d="M6 7v6M8 7v6M10 7v6" stroke="#444"/></svg></span><a href="#">Delete this entry</a></div>
            <div class="act"><span class="ico"><svg width="16" height="16" viewBox="0 0 16 16"><path d="M.7.700h14.600v14H.7z" fill="#fff" stroke="#111" stroke-width="1.300"/><path d="M1 1.500h14v2H1z" fill="#5d7ba0"/><path d="M4 5v6h6M4 7h3" stroke="#888" fill="none"/><path d="M7 5h2v2H7z" fill="#c22"/><path d="M10 7h2v2h-2z" fill="#225"/><path d="M10 11h2v2h-2z" fill="#282"/></svg></span><a href="#">Rename</a></div>
            <div class="act"><span class="ico"><svg width="16" height="16" viewBox="0 0 16 16"><path d="M1 7v8h9" fill="#eee" stroke="#222"/><circle cx="6" cy="5.500" r="5" fill="#edf1f4" stroke="#333"/><path d="M10 9l5 6" stroke="#111" stroke-width="2.500"/></svg></span><a href="#">Compare with another entry</a></div>
            <div class="act"><span class="ico"><svg width="16" height="16" viewBox="0 0 16 16"><path d="M8 0l2.200 5.500 5.800.3-4.500 3.600L13 15l-5-3.200L3 15l1.500-5.600L0 5.800l5.800-.3z" fill="#fcae17"/></svg></span><a href="#">Create a child entry</a></div>
            <div class="act"><span class="ico"><svg width="16" height="16" viewBox="0 0 16 16"><path d="M.5.500h6l3 3v10h-9z" fill="#fff" stroke="#111"/><circle cx="10.500" cy="10.500" r="5" fill="#a79dbd" stroke="#111"/><path d="M8 10.500h5M10.500 8v5" stroke="#000" stroke-width="1.200"/></svg></span><a href="#">Add new attribute</a></div>
            <div class="act hint"><span class="ico"><svg width="14" height="17"><use href="#bulb"/></svg></span>Hint: To delete an attribute, empty the text field and click save.</div>
            <div></div>
            <div class="act"><span class="ico"><svg width="14" height="16" viewBox="0 0 14 16"><path d="M4.500.500h5v6H13L7 12 1 6.500h3.500z" fill="#8db580" stroke="#111"/><path d="M.7 13.500h12.600v2H.7z" fill="#7a9a70" stroke="#111"/></svg></span><a href="#">View 1 child</a></div>
            <div class="act"><span class="ico"><svg width="24" height="24"><use href="#disk-out"/></svg></span><a href="#">Export subtree</a></div>
            <div class="act hint"><span class="ico"><svg width="14" height="17"><use href="#bulb"/></svg></span>Hint: To view the schema for an attribute, click the attribute name.</div>
          </div>

          <form class="attrs">
            <div class="attr-head d-flex align-items-center justify-content-between"><label for="dc">dc</label><span class="notes"><abbr>required</abbr>, <abbr>rdn</abbr></span></div>
            <div class="attr-body">
              <div class="value"><input id="dc" value="example" readonly><span class="star">*</span></div>
              <div class="more tiny">(<a href="#">rename</a>)</div>
            </div>
            <div class="attr-head d-flex align-items-center justify-content-between"><label for="org">o</label><span class="notes"><abbr>required</abbr></span></div>
            <div class="attr-body">
              <div class="value"><input id="org" value="Example Inc."></div>
              <div class="more">(<a href="#">add value</a>)</div>
            </div>
            <div class="attr-head d-flex align-items-center justify-content-between"><label for="oc1">objectClass</label><span class="notes"><abbr>required</abbr></span></div>
            <div class="attr-body">
              <div class="value"><span class="info"><svg width="15" height="15"><use href="#info"/></svg></span><input id="oc1" value="top"></div>
              <div class="value"><span class="info"><svg width="15" height="15"><use href="#info"/></svg></span><input value="dcObject" aria-label="objectClass 2"></div>
              <div class="value"><span class="info"><svg width="15" height="15"><use href="#info"/></svg></span><input value="organization" aria-label="objectClass 3" readonly><span class="aside">(<abbr>structural</abbr>)</span></div>
              <div class="more">(<a href="#">add value</a>)</div>
            </div>
            <div class="text-center"><button type="button" class="update">Update Object</button></div>
          </form>
        </main>
      </div>
      <div class="version">1.2.5</div>
    </div>
  </div>
</div>
<script src="https://cdn.jsdelivr.net/npm/bootstrap@5.3.0/dist/js/bootstrap.bundle.min.js"></script>
</body>
</html>
